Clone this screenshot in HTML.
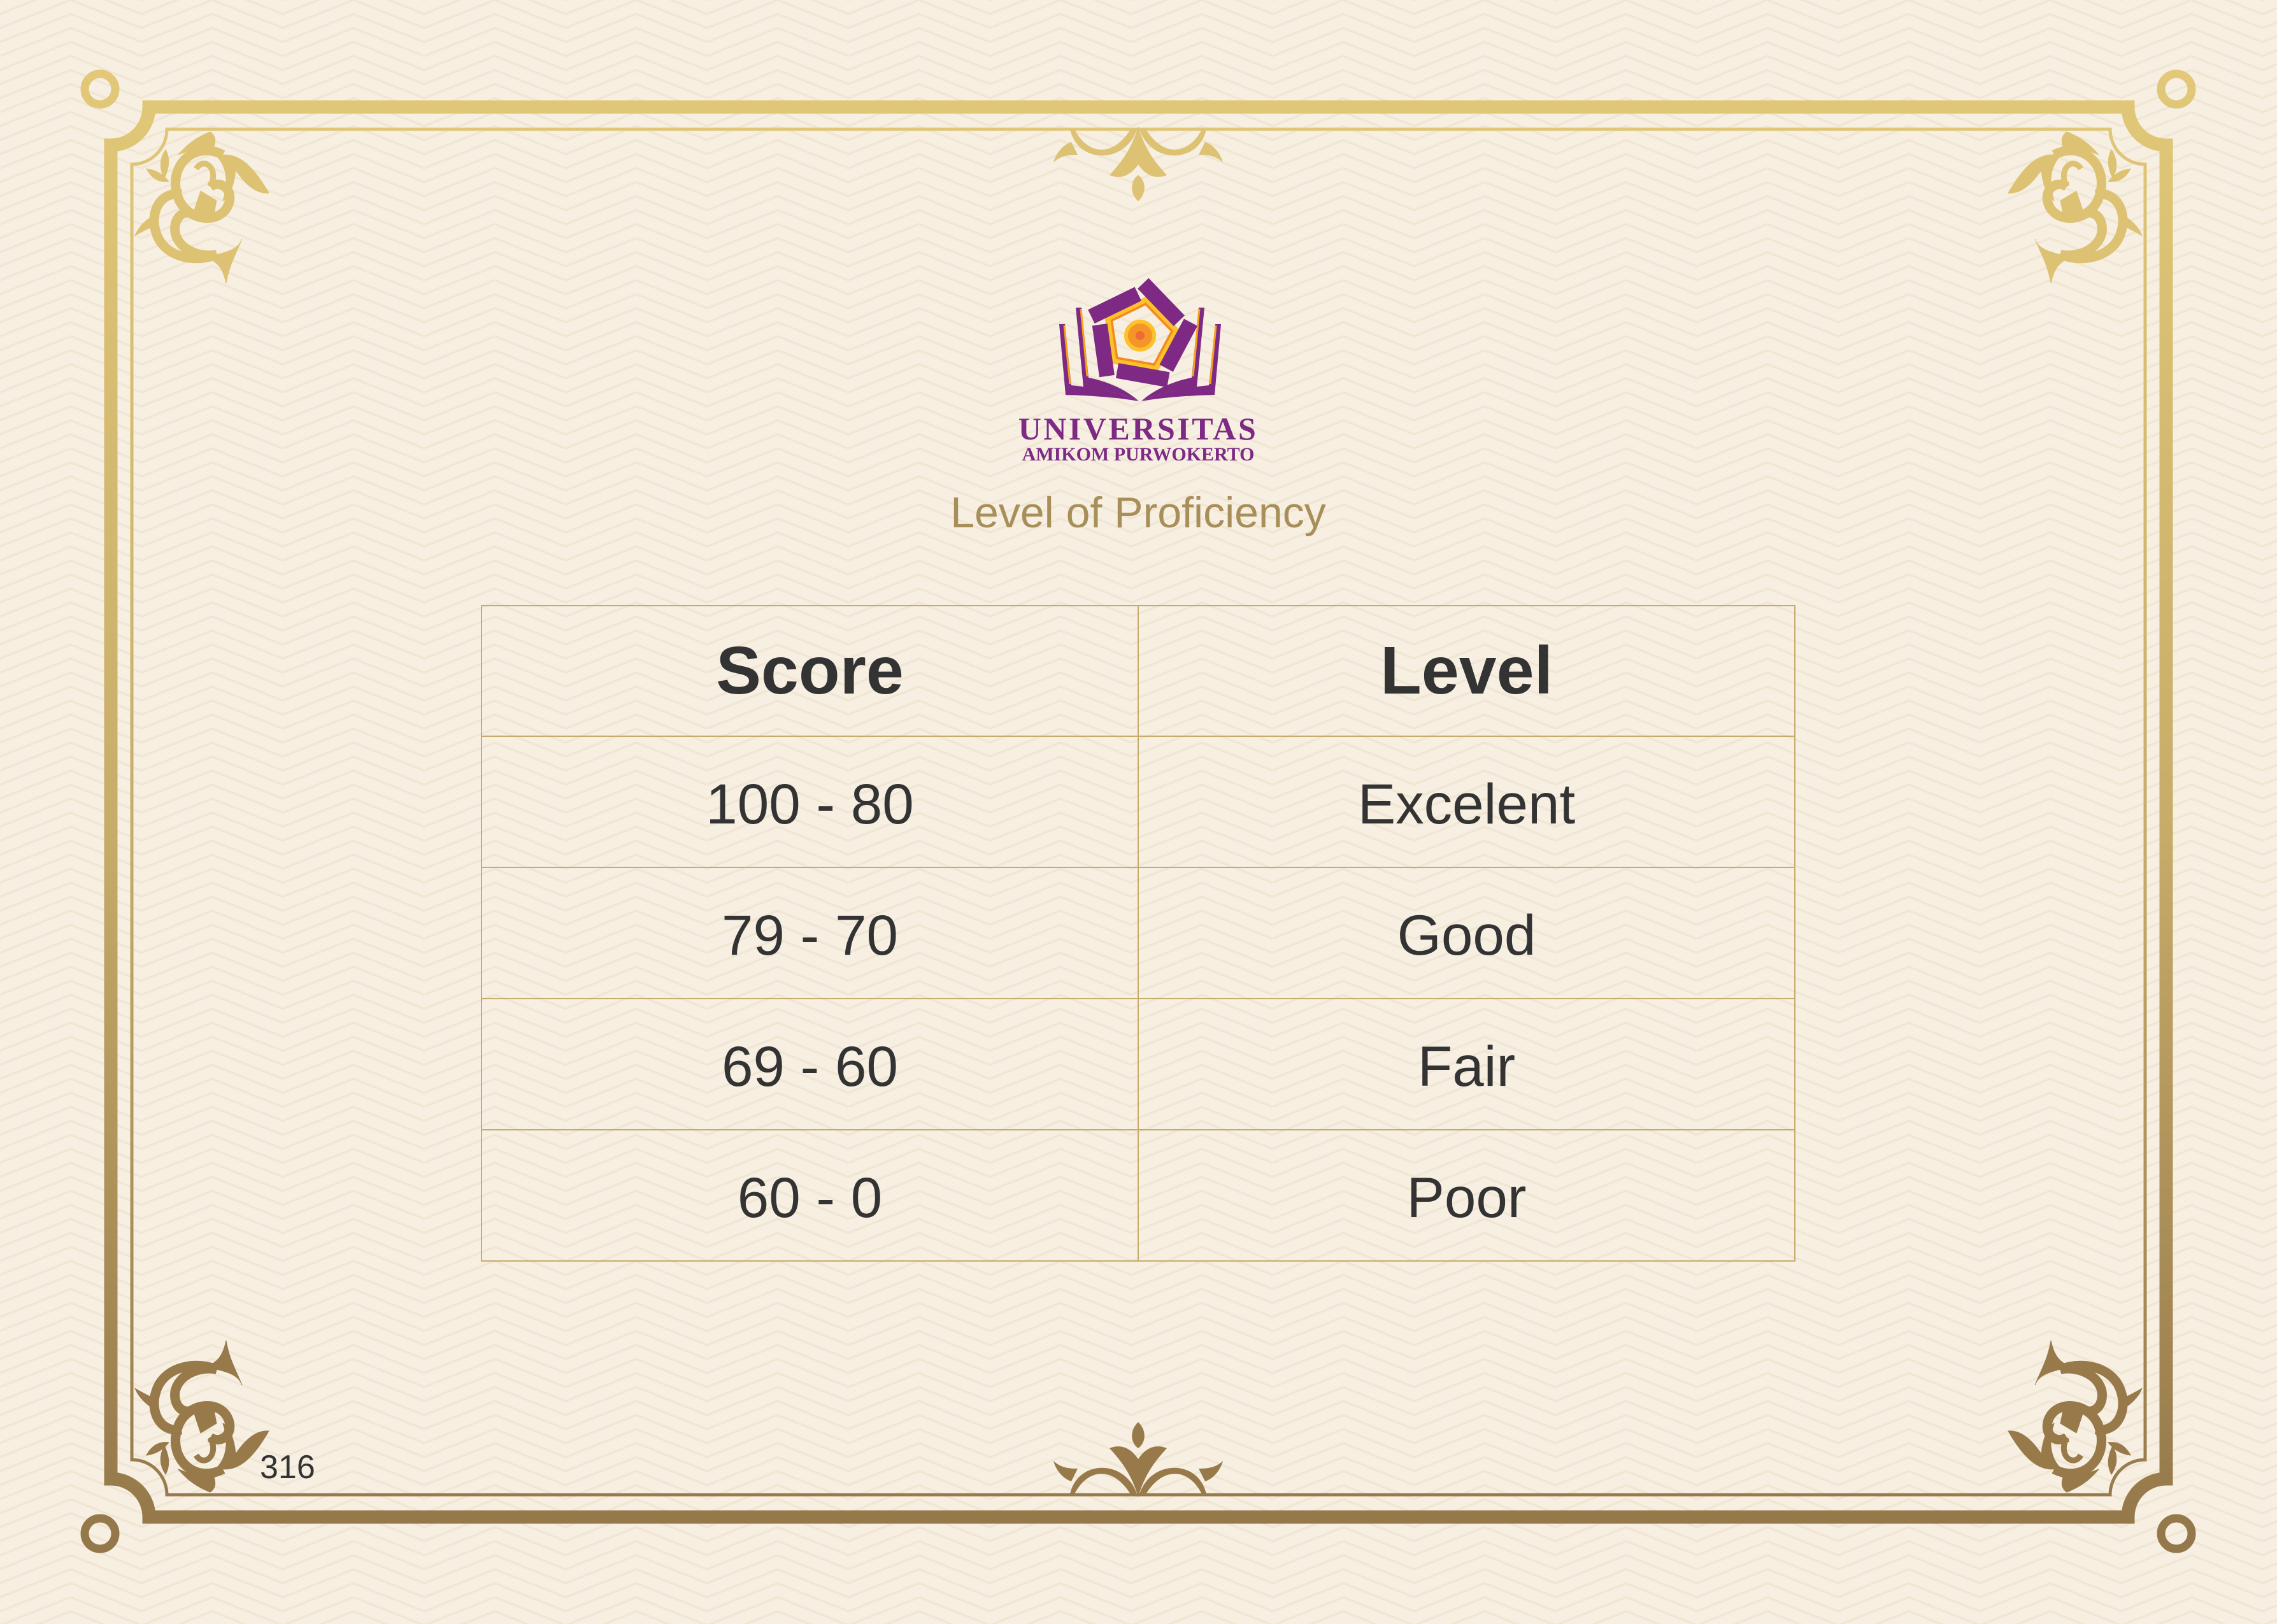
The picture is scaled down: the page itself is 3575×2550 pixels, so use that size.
<!DOCTYPE html>
<html><head><meta charset="utf-8"><style>
html,body{margin:0;padding:0}
body{width:3575px;height:2550px;position:relative;background:#F6EFE2;overflow:hidden;font-family:"Liberation Sans",sans-serif}
svg.bg{position:absolute;left:0;top:0}
.t{position:absolute;white-space:nowrap}
table{position:absolute;left:755px;top:950px;width:2064px;border-collapse:collapse}
td{border:2.5px solid #C6AC6C;text-align:center;color:#333;padding:0;width:50%}
tr.h td{font-weight:bold;font-size:106px;height:203px}
tr.b td{font-size:89px;padding-top:6px;height:198px}
</style></head><body>
<svg class="bg" width="3575" height="2550" viewBox="0 0 3575 2550">
<defs>
<pattern id="chev" width="222" height="22" patternUnits="userSpaceOnUse">
<path d="M0,-66 L111,-110 L222,-66 M0,-44 L111,-88 L222,-44 M0,-22 L111,-66 L222,-22 M0,0 L111,-44 L222,0 M0,22 L111,-22 L222,22 M0,44 L111,0 L222,44 M0,66 L111,22 L222,66" stroke="#F0E6D3" stroke-width="3.5" fill="none"/>
</pattern>
<linearGradient id="g" gradientUnits="userSpaceOnUse" x1="0" y1="100" x2="0" y2="2450">
<stop offset="0" stop-color="#E2C878"/><stop offset="0.5" stop-color="#C8AD6A"/><stop offset="1" stop-color="#937649"/>
</linearGradient>
<g id="orn">
<path d="M140,38 C95,15 55,55 68,100 C80,145 140,150 150,112 C155,90 135,78 120,88" stroke-width="15" fill="none"/>
<path d="M120,88 C135,60 110,40 98,60" stroke-width="9" fill="none"/>
<path d="M130,40 C165,30 190,60 212,98 C190,100 172,80 160,62 C158,85 150,105 140,110 C150,80 145,55 130,40Z"/>
<path d="M120,2 C100,10 85,20 70,38 C95,28 110,25 125,28 C130,15 128,8 120,2Z"/>
<path d="M75,100 C40,95 25,130 35,160 C45,195 90,210 130,195 C100,200 70,185 65,160 C62,140 75,125 90,130" stroke-width="15" fill="none"/>
<path d="M130,195 C150,190 165,185 170,170 C160,195 150,210 145,240 C140,215 130,205 115,200Z"/>
<path d="M35,130 C20,140 8,150 2,165 C10,160 20,155 30,150Z"/>
<path d="M50,30 C40,45 40,60 48,75 C55,60 58,45 50,30Z"/>
<path d="M20,60 C28,75 40,82 55,80 C45,68 35,62 20,60Z"/>
<path d="M105,95 L130,110 L125,135 L95,125Z"/>
</g>
<g id="ctr">
<path d="M-107,0 C-95,55 -20,55 -2,0 L-12,0 C-40,45 -80,40 -100,0Z"/>
<path d="M107,0 C95,55 20,55 2,0 L12,0 C40,45 80,40 100,0Z"/>
<path d="M-105,20 C-120,25 -130,40 -133,52 C-120,40 -105,40 -95,40Z"/>
<path d="M105,20 C120,25 130,40 133,52 C120,40 105,40 95,40Z"/>
<path d="M0,-5 C-10,30 -25,50 -45,72 C-25,80 -10,70 0,55 C10,70 25,80 45,72 C25,50 10,30 0,-5Z"/>
<path d="M0,72 C-12,80 -14,100 0,113 C14,100 12,80 0,72Z"/>
</g>
<g id="page">
<path d="M-127,-18 L-118,-18 L-108,78 C-65,82 -25,92 -2,103 C-35,97 -80,94 -117,93 Z" fill="#7E2A84"/>
<path d="M-119,-16 L-110,76" stroke="#F7A21B" stroke-width="3"/>
<path d="M-101,-44 L-92,-44 L-81,66 C-50,72 -20,86 -2,103 C-25,92 -60,84 -89,81 Z" fill="#7E2A84"/>
<path d="M-93,-42 L-83,64" stroke="#F7A21B" stroke-width="3"/>
</g>
<g id="bar"><path d="M-8,-68 L47,-28" stroke="#7E2A84" stroke-width="20"/></g>
</defs>
<rect width="3575" height="2550" fill="url(#chev)"/>
<g fill="none" stroke="url(#g)">
<path d="M234,168 L3341,168 A60,60 0 0 0 3401,228 L3401,2322 A60,60 0 0 0 3341,2382 L234,2382 A60,60 0 0 0 174,2322 L174,228 A60,60 0 0 0 234,168Z" stroke-width="21"/>
<path d="M262,203 L3313,203 A55,55 0 0 0 3368,258 L3368,2292 A55,55 0 0 0 3313,2347 L262,2347 A55,55 0 0 0 207,2292 L207,258 A55,55 0 0 0 262,203Z" stroke-width="5"/>
<circle cx="157" cy="140" r="24" stroke-width="13"/>
<circle cx="3417" cy="140" r="24" stroke-width="13"/>
<circle cx="157" cy="2408" r="24" stroke-width="13"/>
<circle cx="3417" cy="2408" r="24" stroke-width="13"/>
</g>
<g fill="#DDC273" stroke="#DDC273">
<use href="#orn" transform="translate(210,205)"/>
<use href="#orn" transform="translate(3365,205) scale(-1,1)"/>
<use href="#ctr" stroke="none" transform="translate(1787,203)"/>
</g>
<g fill="#97794A" stroke="#97794A">
<use href="#orn" transform="translate(210,2345) scale(1,-1)"/>
<use href="#orn" transform="translate(3365,2345) scale(-1,-1)"/>
<use href="#ctr" stroke="none" transform="translate(1787,2346) scale(1,-1)"/>
</g>
<g transform="translate(1790,527)">
<use href="#page"/>
<use href="#page" transform="scale(-1,1)"/>
<g transform="rotate(10) scale(1.2)">
<polygon points="0,-47 44.7,-14.5 27.6,38 -27.6,38 -44.7,-14.5" fill="none" stroke="#FDC12B" stroke-width="9"/>
<polygon points="0,-42 40,-13 24.7,34 -24.7,34 -40,-13" fill="none" stroke="#F38A1F" stroke-width="3"/>
<use href="#bar"/>
<use href="#bar" transform="rotate(72)"/>
<use href="#bar" transform="rotate(144)"/>
<use href="#bar" transform="rotate(216)"/>
<use href="#bar" transform="rotate(288)"/>
</g>
<circle cx="0" cy="0" r="22" fill="#F4952A" stroke="#FDC12B" stroke-width="6"/>
<circle cx="0" cy="0" r="7" fill="#EF6B34"/>
</g>
</svg>
<div class="t" style="left:1580px;top:644px;width:414px;text-align:center;font-family:'Liberation Serif',serif;font-weight:bold;font-size:50px;color:#7E2A84;letter-spacing:3.5px">UNIVERSITAS</div>
<div class="t" style="left:1580px;top:697px;width:414px;text-align:center;font-family:'Liberation Serif',serif;font-weight:bold;font-size:30px;color:#7E2A84">AMIKOM PURWOKERTO</div>
<div class="t" style="left:1387px;top:766px;width:800px;text-align:center;font-size:68px;color:#A88E59">Level of Proficiency</div>
<table>
<tr class="h"><td>Score</td><td>Level</td></tr>
<tr class="b"><td>100 - 80</td><td>Excelent</td></tr>
<tr class="b"><td>79 - 70</td><td>Good</td></tr>
<tr class="b"><td>69 - 60</td><td>Fair</td></tr>
<tr class="b"><td>60 - 0</td><td>Poor</td></tr>
</table>
<div class="t" style="left:408px;top:2274px;font-size:52px;color:#333">316</div>
</body></html>
